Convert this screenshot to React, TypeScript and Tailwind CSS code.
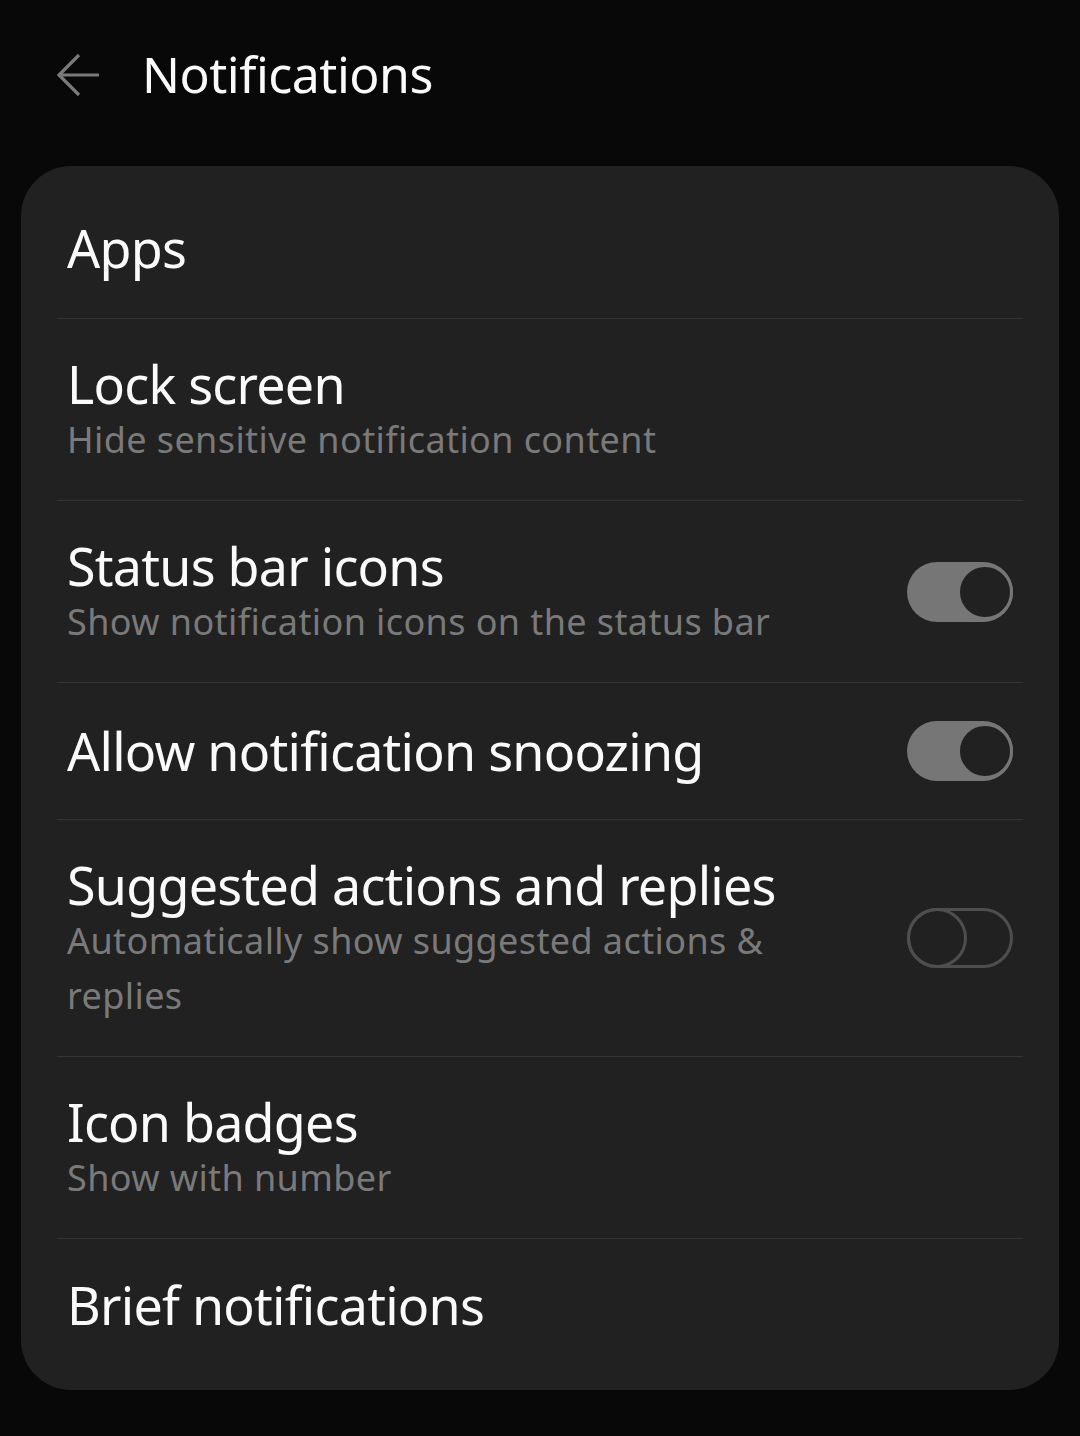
import React from "react";

const font = { fontFamily: '"Noto Sans", "Open Sans", sans-serif' };

function Toggle({ on }: { on: boolean }) {
  if (on) {
    return (
      <div className="relative h-[60px] w-[106px] shrink-0 rounded-full bg-[#767676]">
        <div className="absolute right-0 top-[2px] h-[56px] w-[56px] rounded-full border-[3px] border-[#767676] bg-[#212121]" />
      </div>
    );
  }
  return (
    <div className="relative h-[60px] w-[106px] shrink-0 rounded-full border-[3px] border-[#4e4e4e]">
      <div className="absolute left-[-3px] top-[-3px] h-[60px] w-[60px] rounded-full border-[3px] border-[#4e4e4e]" />
    </div>
  );
}

type Row = { title: string; sub?: string; toggle?: boolean; h: string; t?: string };

const rows: Row[] = [
  { title: "Apps", h: "h-[152px] pt-[12px]" },
  { title: "Lock screen", sub: "Hide sensitive notification content", h: "h-[181px]", t: "pt-[4px]" },
  { title: "Status bar icons", sub: "Show notification icons on the status bar", toggle: true, h: "h-[181px]", t: "pt-[4px]" },
  { title: "Allow notification snoozing", toggle: true, h: "h-[136px]" },
  { title: "Suggested actions and replies", sub: "Automatically show suggested actions & replies", toggle: false, h: "h-[236px]", t: "pt-[4px]" },
  { title: "Icon badges", sub: "Show with number", h: "h-[181px]", t: "pt-[4px]" },
  { title: "Brief notifications", h: "h-[151px] pb-[20px]" },
];

export default function App() {
  return (
    <div className="min-h-[1436px] w-[1080px] bg-[#080808]" style={font}>
      <div className="flex h-[166px] items-start">
        <div className="flex h-[148px] items-center">
          <svg className="ml-[56px] mt-[2px]" width="44" height="46" viewBox="0 0 44 46" fill="none">
            <path d="M43 23H3M23 3L3 23L23 43" stroke="#7a7a7a" strokeWidth="3.2" strokeLinecap="butt" />
          </svg>
          <div className="ml-[42px] text-[50px] leading-[60px] text-[#fafafa] tracking-[-0.5px]">Notifications</div>
        </div>
      </div>
      <div className="mx-[21px] overflow-hidden rounded-[50px] bg-[#212121]">
        {rows.map((r, i) => (
          <div key={r.title}>
            {i > 0 && <div className="mx-[36px] h-[1px] bg-[#343434]" />}
            <div className={`flex items-center justify-between pl-[46px] pr-[46px] ${r.h}`}>
              <div className={`flex max-w-[760px] flex-col ${r.t ?? ""}`}>
                <div className="text-[52px] leading-[56px] text-[#fafafa] tracking-[-0.75px]">{r.title}</div>
                {r.sub && (
                  <div className="text-[36px] leading-[55px] text-[#7a7a7a] tracking-[0.4px]">{r.sub}</div>
                )}
              </div>
              {r.toggle !== undefined && <Toggle on={r.toggle} />}
            </div>
          </div>
        ))}
      </div>
    </div>
  );
}
